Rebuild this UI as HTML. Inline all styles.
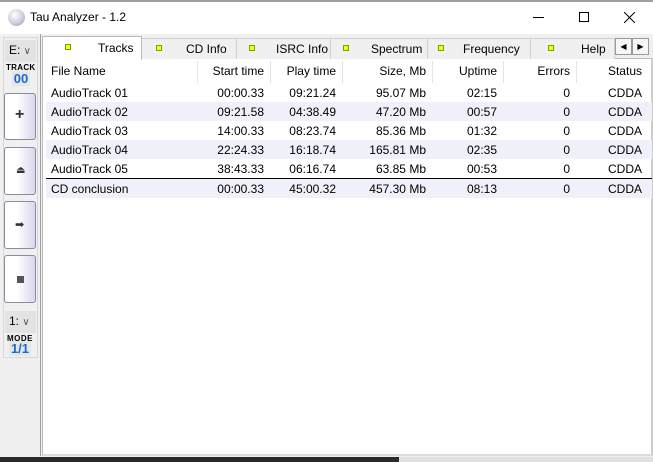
<!DOCTYPE html><html><head><style>
*{margin:0;padding:0;box-sizing:border-box}
body{width:653px;height:462px;background:#f0f0f0;font-family:"Liberation Sans",sans-serif;font-size:12px;color:#000;position:relative;overflow:hidden}
.a{position:absolute}
.title{left:0;top:0;width:653px;height:34px;background:#fff;border-top:2px solid #a0a0a0}
.btn{left:4px;width:32px;height:47px;border:1px solid #8a8aa0;border-radius:3px;background:linear-gradient(90deg,#fff 40%,#d8d8ec);}
.row{left:46px;width:606px;height:19px}
.row span{position:absolute;top:3px}
.alt{background:#f0f0fa}
.tab{top:38px;height:21px;border:1px solid #d0d0d0;border-bottom:none;background:#f0f0f0;font-size:12px}
.tab i{position:absolute;top:6px;width:6px;height:6px;background:#ff0;border:1px solid #6a0}
.tab b{position:absolute;top:3px;font-weight:normal}
</style></head><body>
<div class="a title"></div>
<div class="a" style="left:8px;top:9px;width:17px;height:17px;border-radius:50%;background:radial-gradient(circle at 40% 35%,#fff,#c8c8d8 60%,#9090a8)"></div>
<div class="a" style="left:30px;top:10px;font-size:12px">Tau Analyzer - 1.2</div>
<div class="a" style="left:533px;top:17px;width:11px;height:1px;background:#000"></div>
<div class="a" style="left:579px;top:12px;width:10px;height:10px;border:1px solid #000"></div>
<svg class="a" style="left:624px;top:12px" width="11" height="11"><path d="M0 0L11 11M11 0L0 11" stroke="#000" stroke-width="1"/></svg>
<div class="a" style="left:40px;top:34px;width:1px;height:422px;background:#a0a0a0"></div>
<div class="a" style="left:3px;top:37px;width:35px;height:321px;border:1px solid #d8d8d8"></div>
<div class="a" style="left:5px;top:40px;width:31px;height:22px;background:#e3e3e3;font-size:12px;padding:3px 0 0 4px">E: <span style="color:#555;font-size:10px">&#8744;</span></div>
<div class="a" style="left:6px;top:63px;font-size:8px;font-weight:bold;letter-spacing:0.3px">TRACK</div>
<div class="a" style="left:12px;top:71px;width:18px;height:15px;background:#e6e6e6;color:#1a6ad0;font-weight:bold;font-size:13px;text-align:center">00</div>
<div class="a btn" style="top:93px;height:47px"><div class="a" style="left:10px;top:12px;font-size:16px;font-weight:bold;color:#333">+</div></div>
<div class="a btn" style="top:147px;height:48px"><div class="a" style="left:11px;top:17px;font-size:10px;color:#333">⏏</div></div>
<div class="a btn" style="top:201px;height:48px"><div class="a" style="left:10px;top:16px;font-size:11px;color:#333">➡</div></div>
<div class="a btn" style="top:255px;height:48px"><div class="a" style="left:12px;top:20px;width:7px;height:7px;background:#555"></div></div>
<div class="a" style="left:5px;top:311px;width:31px;height:22px;background:#e3e3e3;font-size:12px;padding:3px 0 0 4px">1: <span style="color:#555;font-size:10px">&#8744;</span></div>
<div class="a" style="left:7px;top:334px;font-size:8px;font-weight:bold;letter-spacing:0.5px">MODE</div>
<div class="a" style="left:9px;top:341px;width:22px;height:15px;background:#e6e6e6;color:#1a6ad0;font-weight:bold;font-size:13px;text-align:center">1/1</div>
<div class="a" style="left:42px;top:58px;width:611px;height:398px;background:#fff;border:1px solid #bbb;border-right:2px solid #ccc;border-bottom:2px solid #ddd"></div>
<div class="a tab" style="left:141px;width:96px"><i style="left:14px"></i><b style="left:44px">CD Info</b></div>
<div class="a tab" style="left:236px;width:95px"><i style="left:12px"></i><b style="left:39px">ISRC Info</b></div>
<div class="a tab" style="left:330px;width:98px"><i style="left:12px"></i><b style="left:40px">Spectrum</b></div>
<div class="a tab" style="left:427px;width:104px"><i style="left:10px"></i><b style="left:35px">Frequency</b></div>
<div class="a tab" style="left:530px;width:85px"><i style="left:17px"></i><b style="left:50px">Help</b></div>
<div class="a tab" style="left:42px;top:36px;width:100px;height:24px;background:#fff;border-color:#bbb"><i style="left:22px;top:7px"></i><b style="left:55px;top:4px">Tracks</b></div>
<div class="a" style="left:615px;top:38px;width:17px;height:17px;border:1px solid #999;background:#f6f6f6;font-size:8px;text-align:center;line-height:15px">◀</div>
<div class="a" style="left:632px;top:38px;width:17px;height:17px;border:1px solid #999;background:#f6f6f6;font-size:8px;text-align:center;line-height:15px">▶</div>
<div class="a row" style="top:61px;height:22px"><span style="left:5px">File Name</span><span style="right:388px">Start time</span><span style="right:316px">Play time</span><span style="right:226px">Size, Mb</span><span style="right:155px">Uptime</span><span style="right:82px">Errors</span><span style="right:10px">Status</span>
<div class="a" style="left:151px;top:0;width:1px;height:22px;background:#e4e4e4"></div><div class="a" style="left:224px;top:0;width:1px;height:22px;background:#e4e4e4"></div><div class="a" style="left:296px;top:0;width:1px;height:22px;background:#e4e4e4"></div><div class="a" style="left:386px;top:0;width:1px;height:22px;background:#e4e4e4"></div><div class="a" style="left:457px;top:0;width:1px;height:22px;background:#e4e4e4"></div><div class="a" style="left:530px;top:0;width:1px;height:22px;background:#e4e4e4"></div></div>
<div class="a row" style="top:83px"><span style="left:5px">AudioTrack 01</span><span style="right:388px">00:00.33</span><span style="right:316px">09:21.24</span><span style="right:226px">95.07 Mb</span><span style="right:155px">02:15</span><span style="right:82px">0</span><span style="right:10px">CDDA</span></div>
<div class="a row alt" style="top:102px"><span style="left:5px">AudioTrack 02</span><span style="right:388px">09:21.58</span><span style="right:316px">04:38.49</span><span style="right:226px">47.20 Mb</span><span style="right:155px">00:57</span><span style="right:82px">0</span><span style="right:10px">CDDA</span></div>
<div class="a row" style="top:121px"><span style="left:5px">AudioTrack 03</span><span style="right:388px">14:00.33</span><span style="right:316px">08:23.74</span><span style="right:226px">85.36 Mb</span><span style="right:155px">01:32</span><span style="right:82px">0</span><span style="right:10px">CDDA</span></div>
<div class="a row alt" style="top:140px"><span style="left:5px">AudioTrack 04</span><span style="right:388px">22:24.33</span><span style="right:316px">16:18.74</span><span style="right:226px">165.81 Mb</span><span style="right:155px">02:35</span><span style="right:82px">0</span><span style="right:10px">CDDA</span></div>
<div class="a row" style="top:159px"><span style="left:5px">AudioTrack 05</span><span style="right:388px">38:43.33</span><span style="right:316px">06:16.74</span><span style="right:226px">63.85 Mb</span><span style="right:155px">00:53</span><span style="right:82px">0</span><span style="right:10px">CDDA</span></div>
<div class="a" style="left:46px;top:178px;width:606px;height:1px;background:#000"></div>
<div class="a row alt" style="top:179px"><span style="left:5px">CD conclusion</span><span style="right:388px">00:00.33</span><span style="right:316px">45:00.32</span><span style="right:226px">457.30 Mb</span><span style="right:155px">08:13</span><span style="right:82px">0</span><span style="right:10px">CDDA</span></div>
<div class="a" style="left:0;top:457px;width:399px;height:5px;background:#2b2b2b"></div>
<div class="a" style="left:399px;top:457px;width:254px;height:5px;background:#e0e0e0"></div>
</body></html>
